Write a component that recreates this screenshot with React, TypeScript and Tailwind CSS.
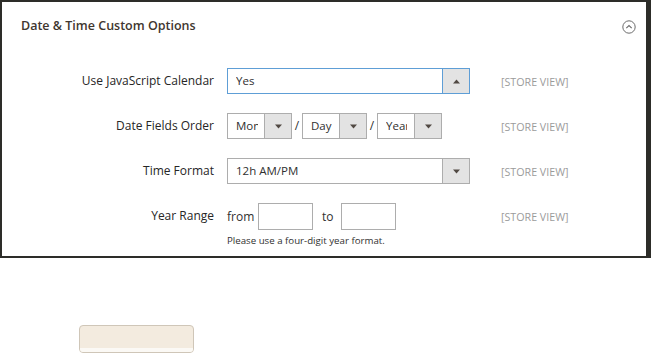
import React from 'react';

function Arrow({ up = false }: { up?: boolean }) {
  return (
    <svg width="7" height="5" viewBox="0 0 7 5" className="block">
      {up ? <path d="M0 4.5 L3.5 0.5 L7 4.5 Z" fill="#514943" /> : <path d="M0 0.5 L7 0.5 L3.5 4.5 Z" fill="#514943" />}
    </svg>
  );
}

function Select({
  value,
  width,
  textWidth,
  focused = false,
  up = false,
}: {
  value: string;
  width: string;
  textWidth?: string;
  focused?: boolean;
  up?: boolean;
}) {
  const border = focused ? 'border-[#5e9ed6]' : 'border-[#adadad]';
  return (
    <div className={`flex h-[26px] ${width} border ${border} bg-white`}>
      <div className="flex-1 pl-[8px] text-[11.5px] leading-[24px] text-[#303030]">
        <div className={`overflow-hidden whitespace-nowrap ${textWidth ?? ''}`}>{value}</div>
      </div>
      <div className={`flex w-[27px] items-center justify-center border-l ${border} bg-[#e3e3e3]`}>
        <Arrow up={up} />
      </div>
    </div>
  );
}

function StoreView() {
  return <span className="text-[10.7px] leading-[26px] text-[#9b9b9b]">[STORE VIEW]</span>;
}

function Row({ label, children }: { label: string; children: React.ReactNode }) {
  return (
    <div className="flex items-start">
      <div className="w-[212px] text-right text-[12px] font-medium leading-[26px] text-[#262626]">{label}</div>
      <div className="ml-[13px] w-[243px]">{children}</div>
      <div className="ml-[31px]">
        <StoreView />
      </div>
    </div>
  );
}

export default function App() {
  return (
    <div className="h-[353px] w-[651px] bg-white" style={{ fontFamily: '"Open Sans", "Liberation Sans", sans-serif' }}>
      <div className="h-[258px] border-t-2 border-b-2 border-l-2 border-r-[5px] border-[#2d2d29]">
        <div className="flex h-[46px] items-center justify-between pl-[19px] pr-[10px]">
          <h2 className="pt-[3px] text-[12.5px] font-semibold text-[#41362f]">Date &amp; Time Custom Options</h2>
          <svg width="14" height="14" viewBox="0 0 14 14" className="mt-[4px]">
            <circle cx="7" cy="7" r="6.2" fill="none" stroke="#6b6b6b" strokeWidth="1" />
            <path d="M4.3 8.2 L7 5.5 L9.7 8.2" fill="none" stroke="#6b6b6b" strokeWidth="1.1" />
          </svg>
        </div>

        <div className="mt-[20px] flex flex-col gap-[18px]">
          <Row label="Use JavaScript Calendar">
            <Select value="Yes" width="w-[243px]" focused up />
          </Row>

          <Row label="Date Fields Order">
            <div className="flex items-center">
              <Select value="Month" width="w-[65px]" textWidth="w-[22px]" />
              <span className="w-[10px] text-center text-[12px] text-[#303030]">/</span>
              <Select value="Day" width="w-[65px]" textWidth="w-[22px]" />
              <span className="w-[10px] text-center text-[12px] text-[#303030]">/</span>
              <Select value="Year" width="w-[65px]" textWidth="w-[21px]" />
            </div>
          </Row>

          <Row label="Time Format">
            <Select value="12h AM/PM" width="w-[243px]" />
          </Row>

          <Row label="Year Range">
            <div className="flex items-center text-[12px] text-[#303030]">
              <span className="w-[26px]">from</span>
              <input className="ml-[5px] h-[27px] w-[55px] border border-[#adadad] bg-white" />
              <span className="ml-[9px] w-[11px]">to</span>
              <input className="ml-[8px] h-[27px] w-[55px] border border-[#adadad] bg-white" />
            </div>
            <p className="mt-[4px] text-[9.7px] text-[#303030]">Please use a four-digit year format.</p>
          </Row>
        </div>
      </div>

      <div className="ml-[79px] mt-[67px] h-[28px] w-[115px] overflow-hidden rounded-[4px] border border-[#cfc6b8] bg-[#f3ebdf]">
        <div className="mt-[22px] h-[6px] bg-[#fbf9f5]" />
      </div>
    </div>
  );
}
